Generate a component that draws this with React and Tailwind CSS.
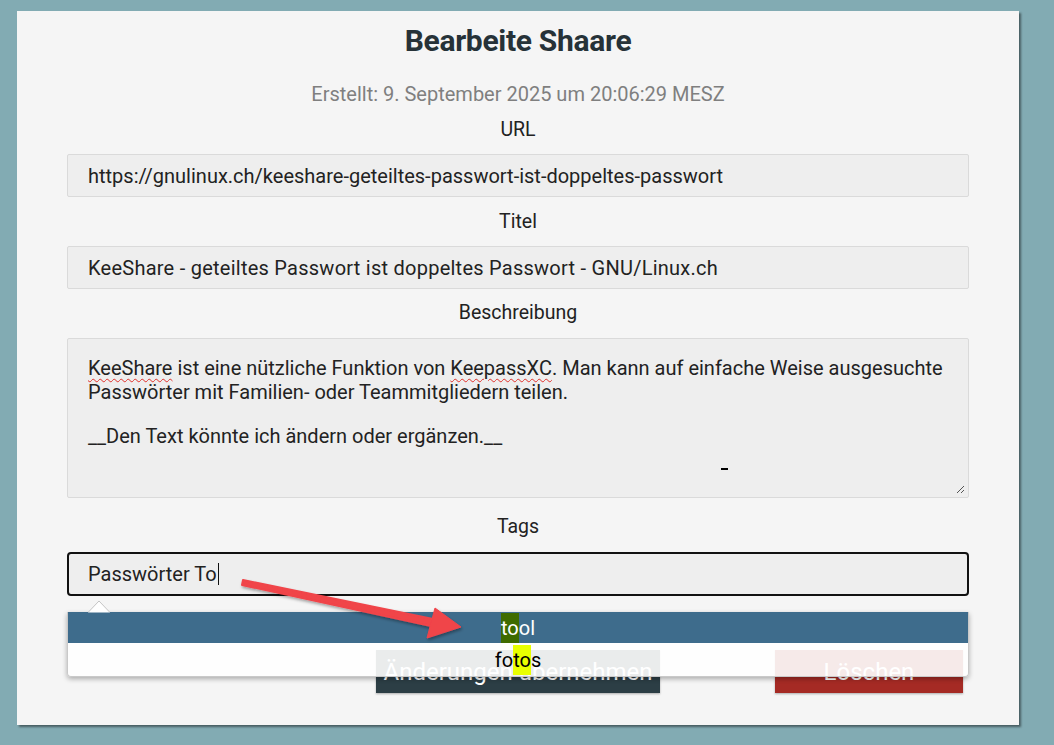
import React from 'react'

const font = { fontFamily: 'Roboto, "Noto Sans", sans-serif' }

function Label({ children, className = '' }) {
  return (
    <div className={`h-6 leading-6 text-center text-[19.5px] text-[#222] ${className}`}>{children}</div>
  )
}

function Field({ children, className = '' }) {
  return (
    <div
      className={`h-[43px] w-full rounded-[2px] border border-[#dadada] bg-[#eeeeee] pl-5 pt-px flex items-center text-[20px] text-[#222] ${className}`}
    >
      {children}
    </div>
  )
}

function RedArrow() {
  return (
    <svg className="absolute left-0 top-0 pointer-events-none" width="1002" height="714">
      <defs>
        <filter id="sh" x="-20%" y="-20%" width="140%" height="140%">
          <feDropShadow dx="1" dy="2" stdDeviation="1.5" floodColor="#000" floodOpacity="0.35" />
        </filter>
      </defs>
      <g filter="url(#sh)" fill="#f0444a" stroke="#f0444a">
        <path d="M226 569 L416 608 L414 615 L225 574 Z" strokeWidth="2" strokeLinejoin="round" />
        <path d="M444 616 L410 627 L418 597 Z" strokeWidth="1" strokeLinejoin="round" />
      </g>
    </svg>
  )
}

export default function App() {
  return (
    <div className="min-h-screen w-full bg-[#82abb3] pt-[11px] pl-[17px]" style={font}>
      <div className="relative w-[1002px] h-[714px] bg-[#f5f5f5] shadow-[2px_2px_2px_rgba(0,0,0,0.45)] px-[50px] pt-[12px] flex flex-col">
        <h1 className="h-9 leading-9 text-center text-[30px] font-bold text-[#263238] tracking-[-0.3px]">
          Bearbeite Shaare
        </h1>
        <div className="mt-[23px] h-6 leading-6 text-center text-[20px] text-[#7f7f7f]">
          Erstellt: 9. September 2025 um 20:06:29 MESZ
        </div>

        <Label className="mt-3">URL</Label>
        <Field className="mt-3">https://gnulinux.ch/keeshare-geteiltes-passwort-ist-doppeltes-passwort</Field>

        <Label className="mt-[13px]">Titel</Label>
        <Field className="mt-3 tracking-[0.25px]">KeeShare - geteiltes Passwort ist doppeltes Passwort - GNU/Linux.ch</Field>

        <Label className="mt-3">Beschreibung</Label>
        <div className="relative mt-[13px] h-[160px] w-full rounded-[2px] border border-[#dadada] bg-[#eeeeee] pl-5 pr-4 pt-[17px] text-[20px] leading-6 text-[#222]">
          <p>
            <span className="underline decoration-wavy decoration-[#e0302a] decoration-1 underline-offset-[3px]">KeeShare</span> ist eine nützliche Funktion von{' '}
            <span className="underline decoration-wavy decoration-[#e0302a] decoration-1 underline-offset-[3px]">KeepassXC</span>. Man kann auf einfache Weise ausgesuchte Passwörter mit Familien- oder Teammitgliedern teilen.
          </p>
          <p className="mt-5">__Den Text könnte ich ändern oder ergänzen.__</p>
          <span className="absolute left-[653px] top-[129px] h-[2px] w-[7px] bg-black" />
          <svg className="absolute right-[3px] bottom-[3px]" width="9" height="9" viewBox="0 0 9 9">
            <path d="M1 8 L8 1 M5 8 L8 5" stroke="#555" strokeWidth="1" />
          </svg>
        </div>

        <Label className="mt-[17px]">Tags</Label>
        <div className="relative mt-[13px]">
          <div className="h-[44px] w-full rounded-[4px] border-2 border-[#111] bg-[#eeeeee] pl-[19px] flex items-center text-[20px] text-[#222]">
            Passwörter To
            <span className="ml-[1px] inline-block h-[22px] w-px bg-[#111]" />
          </div>

          <div className="mt-[15px] flex items-center justify-center gap-2 h-5 text-[16px] text-[#222]">
            <span className="inline-block h-[14px] w-[14px] rounded-[3px] border border-[#767676] bg-white" />
            <span>Privat</span>
          </div>

          <div className="mt-[19px] flex">
            <button className="ml-[309px] h-[43px] w-[284px] bg-[#2c3e45] text-white text-[24px] shadow-[0_1px_2px_rgba(0,0,0,0.3)]">
              Änderungen übernehmen
            </button>
            <button className="ml-[115px] h-[43px] w-[188px] bg-[#a52a24] text-white text-[24px] shadow-[0_1px_2px_rgba(0,0,0,0.3)]">
              Löschen
            </button>
          </div>

          <div className="absolute left-0 right-0 top-[60px] rounded-b-[4px] shadow-[0_2px_5px_rgba(0,0,0,0.3)] border border-[#c9c9c9] border-t-0">
            <svg className="absolute left-[20px] -top-[12px]" width="22" height="13" viewBox="0 0 22 13">
              <path d="M0 12.5 L11 1 L22 12.5" fill="#fff" stroke="#c4c4c4" strokeWidth="1" />
            </svg>
            <div className="h-[31px] bg-[#3e6c8c] flex items-center justify-center text-[20px] text-white">
              <span className="bg-[#3f6b00]">to</span>ol
            </div>
            <div className="h-[33px] bg-white/90 rounded-b-[4px] flex items-center justify-center text-[20px] text-black">
              fo<span className="bg-[#e8ff00]">to</span>s
            </div>
          </div>
        </div>

        <RedArrow />
      </div>
    </div>
  )
}
